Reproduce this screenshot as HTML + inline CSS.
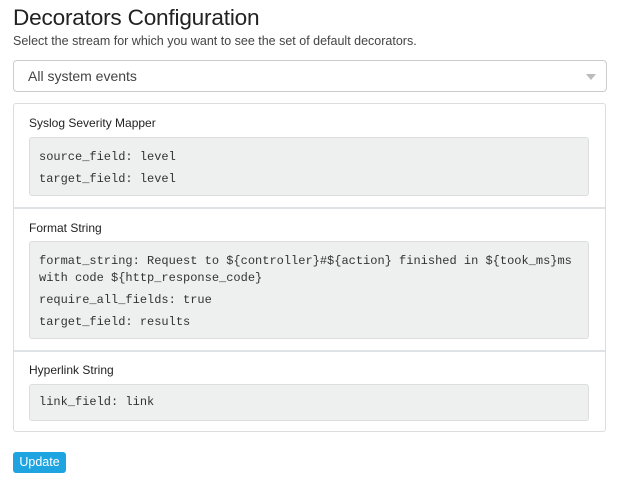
<!DOCTYPE html>
<html><head><style>
body{margin:0;background:#fff;font-family:"Liberation Sans",sans-serif;color:#333;width:620px;height:487px;overflow:hidden;position:relative}
.a{position:absolute}
h1{position:absolute;left:13px;top:5px;margin:0;font-weight:normal;font-size:22.6px;color:#222;letter-spacing:-0.2px}
.sub{left:13px;top:34px;font-size:12.5px;color:#444}
.sel{left:13px;top:60px;width:592px;height:30px;border:1px solid #ccc;border-radius:4px;box-sizing:content-box}
.sel span{position:absolute;left:14px;top:7px;font-size:14px;color:#444}
.tri{position:absolute;right:10px;top:13px;width:0;height:0;border-left:5px solid transparent;border-right:5px solid transparent;border-top:6px solid #bbb}
.list{left:13px;top:103px;width:591px;height:327px;border:1px solid #ddd;border-radius:3px}
.item{position:absolute;left:0;width:591px}
.item .t{position:absolute;left:15px;font-size:12px;color:#222}
pre{position:absolute;left:15px;width:560px;margin:0;background:#eef0ef;border:1px solid #ddd;border-radius:3px;font-family:"Liberation Mono",monospace;font-size:12px;color:#333;box-sizing:border-box;padding:6px 9px 3px;white-space:nowrap;overflow:hidden}
pre div{line-height:17px;margin:5px 0}
.div{position:absolute;left:0;width:591px;height:2px;background:#dfe3e6}
.btn{left:13px;top:452px;width:53px;height:21px;background:#1ea4e0;border-radius:3px;color:#fff;font-size:12.5px;text-align:center;line-height:21px}
</style></head><body>
<h1>Decorators Configuration</h1>
<div class="a sub">Select the stream for which you want to see the set of default decorators.</div>
<div class="a sel"><span>All system events</span><div class="tri"></div></div>
<div class="a list">
 <div class="item" style="top:0">
  <div class="t" style="top:12px">Syslog Severity Mapper</div>
  <pre style="top:33px;height:59px"><div>source_field: level</div><div>target_field: level</div></pre>
 </div>
 <div class="div" style="top:103px"></div>
 <div class="item" style="top:105px">
  <div class="t" style="top:12px">Format String</div>
  <pre style="top:32px;height:98px"><div>format_string: Request to ${controller}#${action} finished in ${took_ms}ms<br>with code ${http_response_code}</div><div>require_all_fields: true</div><div>target_field: results</div></pre>
 </div>
 <div class="div" style="top:246px"></div>
 <div class="item" style="top:248px">
  <div class="t" style="top:11px">Hyperlink String</div>
  <pre style="top:32px;height:37px;padding-top:4px"><div>link_field: link</div></pre>
 </div>
</div>
<div class="a btn">Update</div>
</body></html>
